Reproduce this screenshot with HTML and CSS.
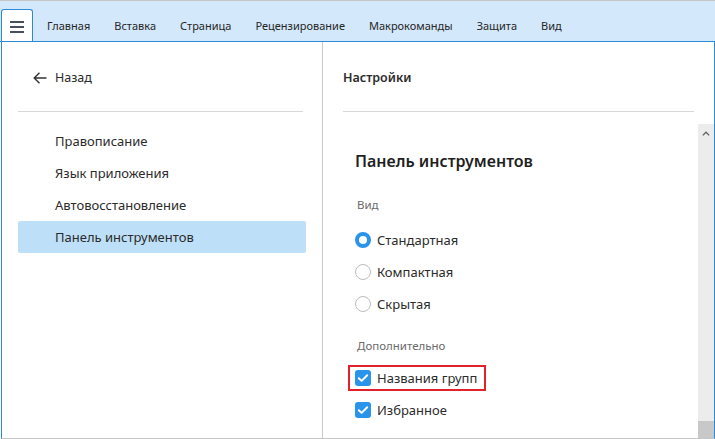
FILE: index.html
```html
<!DOCTYPE html>
<html lang="ru">
<head>
<meta charset="utf-8">
<title>Настройки</title>
<link rel="stylesheet" href="styles.css">
</head>
<body>
<div class="app">
  <div class="ribbon">
    <div class="menu-tab">
      <svg width="14" height="12" viewBox="0 0 14 12"><rect x="0" y="0" width="14" height="2" fill="#45505a"/><rect x="0" y="5" width="14" height="2" fill="#45505a"/><rect x="0" y="10" width="14" height="2" fill="#45505a"/></svg>
    </div>
    <nav class="tabs">
      <span class="tab">Главная</span>
      <span class="tab">Вставка</span>
      <span class="tab">Страница</span>
      <span class="tab">Рецензирование</span>
      <span class="tab">Макрокоманды</span>
      <span class="tab">Защита</span>
      <span class="tab">Вид</span>
    </nav>
  </div>
  <div class="main">
    <aside class="side">
      <div class="back">
        <svg width="14" height="12" viewBox="0 0 14 12"><path d="M13.5 6H1.2M6.5 0.8L1.2 6l5.3 5.2" fill="none" stroke="#333" stroke-width="1.4"/></svg>
        <span>Назад</span>
      </div>
      <div class="sep"></div>
      <ul class="nav">
        <li class="nav-item">Правописание</li>
        <li class="nav-item">Язык приложения</li>
        <li class="nav-item">Автовосстановление</li>
        <li class="nav-item active">Панель инструментов</li>
      </ul>
    </aside>
    <section class="content">
      <div class="content-head">Настройки</div>
      <div class="sep sep-right"></div>
      <div class="scroll">
        <div class="scroll-body">
          <h2 class="title">Панель инструментов</h2>
          <div class="group-label">Вид</div>
          <div class="opt"><span class="radio on"></span><span>Стандартная</span></div>
          <div class="opt"><span class="radio"></span><span>Компактная</span></div>
          <div class="opt"><span class="radio"></span><span>Скрытая</span></div>
          <div class="group-label group-label-2">Дополнительно</div>
          <div class="opt"><span class="mark"><span class="check"><svg width="16" height="16" viewBox="0 0 16 16"><path d="M3.8 8.2l2.8 2.7 5.6-5.6" fill="none" stroke="#fff" stroke-width="2" stroke-linecap="round" stroke-linejoin="round"/></svg></span><span>Названия групп</span></span></div>
          <div class="opt"><span class="check"><svg width="16" height="16" viewBox="0 0 16 16"><path d="M3.8 8.2l2.8 2.7 5.6-5.6" fill="none" stroke="#fff" stroke-width="2" stroke-linecap="round" stroke-linejoin="round"/></svg></span><span>Избранное</span></div>
        </div>
        <div class="scrollbar">
          <div class="sb-up"><svg width="8" height="5" viewBox="0 0 8 5"><path d="M0.8 4.4L4 1.2l3.2 3.2" fill="none" stroke="#606060" stroke-width="1.3"/></svg></div>
          <div class="sb-track"></div>
          <div class="sb-thumb"></div>
        </div>
      </div>
    </section>
  </div>
</div>
</body>
</html>
```
FILE: styles.css
```css
* { box-sizing: border-box; }
html, body { margin: 0; padding: 0; background: #fff; }
body {
  font-family: "Segoe UI", "Noto Sans", "Open Sans", sans-serif;
  color: #2b2b2b;
  width: 715px;
  height: 439px;
  overflow: hidden;
}
.app {
  width: 715px;
  height: 439px;
  display: flex;
  flex-direction: column;
  border-top: 1px solid #c4c4c4;
}
.ribbon {
  height: 41px;
  background: #d3e8fa;
  border-bottom: 1px solid #2d8ad6;
  display: flex;
  align-items: flex-end;
  padding-left: 1px;
}
.menu-tab {
  width: 32px;
  height: 32px;
  background: #fff;
  border: 1px solid #2d8ad6;
  border-bottom: none;
  border-radius: 3px 3px 0 0;
  display: flex;
  align-items: center;
  justify-content: center;
  padding-top: 2px;
}
.tabs {
  display: flex;
  gap: 24px;
  margin-left: 14px;
  height: 32px;
  align-items: center;
}
.tab {
  font-size: 11px;
  color: #262626;
}
.main {
  flex: 1;
  display: flex;
  margin-left: 1px;
  border-left: 1px solid #2d8ad6;
  border-right: 1px solid #2d8ad6;
  border-bottom: 1px solid #c4c4c4;
  min-height: 0;
}
.side {
  width: 321px;
  border-right: 1px solid #c8c8c8;
  padding: 0 0 0 16px;
}
.back {
  height: 69px;
  display: flex;
  align-items: center;
  padding-left: 15px;
  padding-top: 2px;
  gap: 8px;
  font-size: 12.5px;
  color: #2b2b2b;
}
.sep {
  height: 1px;
  background: #d8d8d8;
  width: 285px;
}
.nav {
  list-style: none;
  margin: 13px 0 0;
  padding: 0;
  width: 288px;
}
.nav-item {
  height: 32px;
  line-height: 32px;
  padding-left: 37px;
  font-size: 13px;
  color: #2b2b2b;
  border-radius: 2px;
}
.nav-item.active { background: #bde0f8; }
.content {
  flex: 1;
  display: flex;
  flex-direction: column;
  min-width: 0;
}
.content-head {
  height: 69px;
  padding-left: 20px;
  padding-top: 2px;
  display: flex;
  align-items: center;
  font-size: 12.5px;
  font-weight: 600;
  color: #2b2b2b;
}
.sep-right {
  width: 351px;
  margin-left: 20px;
}
.scroll {
  flex: 1;
  margin-top: 12px;
  display: flex;
  min-height: 0;
}
.scroll-body {
  flex: 1;
  padding: 24px 0 0 32px;
}
.title {
  margin: 0;
  font-size: 16px;
  font-weight: 600;
  line-height: 26px;
  color: #1f1f1f;
}
.group-label {
  margin-top: 21px;
  height: 20px;
  line-height: 20px;
  font-size: 11.5px;
  color: #6a6a6a;
  padding-left: 2px;
  margin-bottom: 9px;
}
.group-label-2 { margin-top: 16px; margin-bottom: 6px; }
.opt {
  height: 32px;
  display: flex;
  align-items: center;
  gap: 6px;
  font-size: 13px;
  color: #2b2b2b;
}
.radio {
  width: 16px;
  height: 16px;
  border-radius: 50%;
  border: 1px solid #bcbcbc;
  background: #fff;
  flex: none;
}
.radio.on {
  border: 4.5px solid #2a93ea;
}
.check {
  width: 16px;
  height: 16px;
  border-radius: 3px;
  background: #2a93ea;
  flex: none;
  display: flex;
}
.mark {
  display: inline-flex;
  align-items: center;
  gap: 6px;
  height: 26px;
  margin-left: -7px;
  padding: 0 7px 0 5px;
  border: 2px solid #e3202d;
}
.scrollbar {
  width: 16px;
  background: #ececec;
  display: flex;
  flex-direction: column;
}
.sb-up {
  height: 18px;
  display: flex;
  align-items: center;
  justify-content: center;
}
.sb-track { flex: 1; }
.sb-thumb {
  height: 17px;
  background: #c8c8c8;
}
```
